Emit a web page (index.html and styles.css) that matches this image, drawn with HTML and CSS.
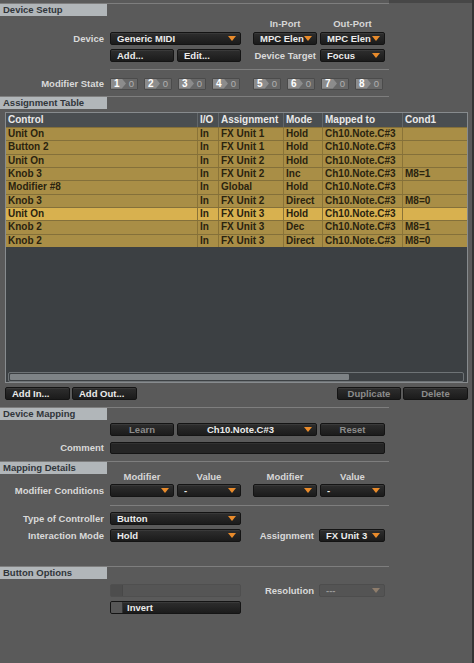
FILE: index.html
```html
<!DOCTYPE html>
<html lang="en">
<head>
<meta charset="utf-8">
<title>Controller Manager</title>
<link rel="stylesheet" href="styles.css">
</head>
<body>
<div class="page">
  <div class="topbar"><div class="topbar-l"></div><div class="topbar-r"></div></div>

  <section class="sec">
    <div class="sec-head"><div class="sec-title">Device Setup</div></div>
    <div class="row row-titles mt2">
      <span class="coltitle c-c">In-Port</span>
      <span class="coltitle c-d">Out-Port</span>
    </div>
    <div class="row mt2">
      <span class="lbl">Device</span>
      <div class="dd c-ab"><span class="dd-t">Generic MIDI</span><svg class="arr" viewBox="0 0 8 5"><path d="M0 0H8L4 5Z"/></svg></div>
      <div class="dd c-c"><span class="dd-t">MPC Elen</span><svg class="arr" viewBox="0 0 8 5"><path d="M0 0H8L4 5Z"/></svg></div>
      <div class="dd c-d"><span class="dd-t">MPC Elen</span><svg class="arr" viewBox="0 0 8 5"><path d="M0 0H8L4 5Z"/></svg></div>
    </div>
    <div class="row mt4">
      <div class="btn btn-left c-a">Add...</div>
      <div class="btn btn-left c-b">Edit...</div>
      <span class="lbl lbl-mid c-c">Device Target</span>
      <div class="dd c-d"><span class="dd-t">Focus</span><svg class="arr" viewBox="0 0 8 5"><path d="M0 0H8L4 5Z"/></svg></div>
    </div>
    <div class="rule rule-inset mt7"></div>
    <div class="row row-mods mt7">
      <span class="lbl">Modifier State</span>
      <div class="modgrp c-a">
        <span class="mod"><span class="mod-n">1</span><span class="mod-v">0</span></span>
        <span class="mod"><span class="mod-n">2</span><span class="mod-v">0</span></span>
      </div>
      <div class="modgrp modgrp-shift c-b">
        <span class="mod"><span class="mod-n">3</span><span class="mod-v">0</span></span>
        <span class="mod"><span class="mod-n">4</span><span class="mod-v">0</span></span>
      </div>
      <div class="modgrp c-c">
        <span class="mod"><span class="mod-n">5</span><span class="mod-v">0</span></span>
        <span class="mod"><span class="mod-n">6</span><span class="mod-v">0</span></span>
      </div>
      <div class="modgrp modgrp-shift c-d">
        <span class="mod"><span class="mod-n">7</span><span class="mod-v">0</span></span>
        <span class="mod"><span class="mod-n">8</span><span class="mod-v">0</span></span>
      </div>
    </div>
  </section>

  <section class="sec mt7">
    <div class="sec-head"><div class="sec-title">Assignment Table</div></div>
    <div class="tbl mt3">
      <div class="tgrid thead">
        <span>Control</span><span>I/O</span><span>Assignment</span><span>Mode</span><span>Mapped to</span><span>Cond1</span>
      </div>
      <div class="tgrid trow"><span>Unit On</span><span>In</span><span>FX Unit 1</span><span>Hold</span><span>Ch10.Note.C#3</span><span></span></div>
      <div class="tgrid trow"><span>Button 2</span><span>In</span><span>FX Unit 1</span><span>Hold</span><span>Ch10.Note.C#3</span><span></span></div>
      <div class="tgrid trow"><span>Unit On</span><span>In</span><span>FX Unit 2</span><span>Hold</span><span>Ch10.Note.C#3</span><span></span></div>
      <div class="tgrid trow"><span>Knob 3</span><span>In</span><span>FX Unit 2</span><span>Inc</span><span>Ch10.Note.C#3</span><span>M8=1</span></div>
      <div class="tgrid trow"><span>Modifier #8</span><span>In</span><span>Global</span><span>Hold</span><span>Ch10.Note.C#3</span><span></span></div>
      <div class="tgrid trow"><span>Knob 3</span><span>In</span><span>FX Unit 2</span><span>Direct</span><span>Ch10.Note.C#3</span><span>M8=0</span></div>
      <div class="tgrid trow trow-sel"><span>Unit On</span><span>In</span><span>FX Unit 3</span><span>Hold</span><span>Ch10.Note.C#3</span><span></span></div>
      <div class="tgrid trow"><span>Knob 2</span><span>In</span><span>FX Unit 3</span><span>Dec</span><span>Ch10.Note.C#3</span><span>M8=1</span></div>
      <div class="tgrid trow"><span>Knob 2</span><span>In</span><span>FX Unit 3</span><span>Direct</span><span>Ch10.Note.C#3</span><span>M8=0</span></div>
      <div class="hscroll"><div class="thumb"></div></div>
    </div>
    <div class="btnbar mt4">
      <div class="btn btn-left btn-w65">Add In...</div>
      <div class="btn btn-left btn-w65">Add Out...</div>
      <div class="btnbar-fill"></div>
      <div class="btn btn-off btn-w64">Duplicate</div>
      <div class="btn btn-off btn-w65">Delete</div>
    </div>
  </section>

  <section class="sec mt7">
    <div class="sec-head"><div class="sec-title">Device Mapping</div></div>
    <div class="row mt3">
      <div class="btn btn-off c-a">Learn</div>
      <div class="dd dd-center c-bc"><span class="dd-t">Ch10.Note.C#3</span><svg class="arr" viewBox="0 0 8 5"><path d="M0 0H8L4 5Z"/></svg></div>
      <div class="btn btn-off c-d">Reset</div>
    </div>
    <div class="row row-12 mt5">
      <span class="lbl">Comment</span>
      <div class="field c-all"></div>
    </div>
  </section>

  <section class="sec mt8">
    <div class="sec-head"><div class="sec-title">Mapping Details</div></div>
    <div class="row row-titles2">
      <span class="coltitle c-a">Modifier</span>
      <span class="coltitle c-b">Value</span>
      <span class="coltitle c-c">Modifier</span>
      <span class="coltitle c-d">Value</span>
    </div>
    <div class="row mt3">
      <span class="lbl">Modifier Conditions</span>
      <div class="dd c-a"><span class="dd-t"></span><svg class="arr" viewBox="0 0 8 5"><path d="M0 0H8L4 5Z"/></svg></div>
      <div class="dd c-b"><span class="dd-t">-</span><svg class="arr" viewBox="0 0 8 5"><path d="M0 0H8L4 5Z"/></svg></div>
      <div class="dd c-c"><span class="dd-t"></span><svg class="arr" viewBox="0 0 8 5"><path d="M0 0H8L4 5Z"/></svg></div>
      <div class="dd c-d"><span class="dd-t">-</span><svg class="arr" viewBox="0 0 8 5"><path d="M0 0H8L4 5Z"/></svg></div>
    </div>
    <div class="rule rule-inset mt8"></div>
    <div class="row mt6">
      <span class="lbl">Type of Controller</span>
      <div class="dd c-ab"><span class="dd-t">Button</span><svg class="arr" viewBox="0 0 8 5"><path d="M0 0H8L4 5Z"/></svg></div>
    </div>
    <div class="row mt4">
      <span class="lbl">Interaction Mode</span>
      <div class="dd c-ab"><span class="dd-t">Hold</span><svg class="arr" viewBox="0 0 8 5"><path d="M0 0H8L4 5Z"/></svg></div>
      <span class="lbl lbl-mid2 c-c">Assignment</span>
      <div class="dd dd-shift c-d"><span class="dd-t">FX Unit 3</span><svg class="arr" viewBox="0 0 8 5"><path d="M0 0H8L4 5Z"/></svg></div>
    </div>
  </section>

  <section class="sec mt24">
    <div class="sec-head"><div class="sec-title">Button Options</div></div>
    <div class="row mt5">
      <div class="slider c-ab"><span class="slider-knob"></span></div>
      <span class="lbl lbl-mid2 c-c">Resolution</span>
      <div class="dd dd-off dd-shift c-d"><span class="dd-t">---</span><svg class="arr" viewBox="0 0 8 5"><path d="M0 0H8L4 5Z"/></svg></div>
    </div>
    <div class="row mt4">
      <div class="chk c-ab"><span class="chk-box"></span><span>Invert</span></div>
    </div>
  </section>
</div>
</body>
</html>
```

FILE: styles.css
```css
* { box-sizing: border-box; }
html, body { margin: 0; padding: 0; }
body {
  width: 474px;
  height: 663px;
  overflow: hidden;
  background: #5a5a5a;
  font-family: "Liberation Sans", Arial, sans-serif;
  font-weight: bold;
  font-size: 9.5px;
  color: #d8d8d8;
}
.page {
  width: 474px;
  height: 663px;
  border-right: 2px solid #343434;
}
.topbar { display: flex; height: 3px; }
.topbar-l { width: 389px; }
.topbar-r { flex: 1; background: #474747; }

.mt2 { margin-top: 2px; }
.mt3 { margin-top: 3px; }
.mt4 { margin-top: 4px; }
.mt5 { margin-top: 5px; }
.mt6 { margin-top: 6px; }
.mt7 { margin-top: 7px; }
.mt8 { margin-top: 8px; }
.mt24 { margin-top: 24px; }

.sec-head {
  width: 389px;
  border-top: 1px solid #7e7e7e;
}
.sec-title {
  width: 107px;
  height: 12px;
  line-height: 12px;
  padding-left: 3px;
  background: #b1b6b9;
  color: #30353a;
  white-space: nowrap;
}

.rule { height: 1px; background: #7e7e7e; width: 389px; }
.rule-inset { margin-left: 110px; width: 279px; }

.row {
  display: grid;
  grid-template-columns: 104px 6px 64px 3px 64px 12px 64px 3px 65px;
  align-items: center;
  width: 389px;
  height: 13px;
}
.row-12 { height: 12px; }
.row-titles { height: 12px; }
.row-titles2 { height: 10px; margin-top: -3px; }
.row-mods { height: 12px; }

.c-a { grid-column: 3; }
.c-b { grid-column: 5; }
.c-c { grid-column: 7; }
.c-d { grid-column: 9; }
.c-ab { grid-column: 3 / 6; }
.c-bc { grid-column: 5 / 8; }
.c-all { grid-column: 3 / 10; }

.lbl {
  grid-column: 1;
  text-align: right;
  white-space: nowrap;
  color: #d9d9d9;
  line-height: 13px;
}
.lbl.c-c { grid-column: 7; }
.lbl-mid { padding-right: 1px; }
.lbl-mid2 { padding-right: 3px; }

.coltitle {
  text-align: center;
  color: #d6d6d6;
  line-height: 12px;
  white-space: nowrap;
}

.dd, .btn, .field, .chk {
  height: 13px;
  border: 1px solid #141414;
  border-radius: 2px;
  background: linear-gradient(#2e2e2e, #1b1b1b);
  box-shadow: inset 0 1px 0 rgba(255,255,255,0.06);
  color: #ececec;
  white-space: nowrap;
  overflow: hidden;
}
.dd {
  display: flex;
  align-items: center;
  padding: 0 4px 0 6px;
}
.dd-t { flex: 1; line-height: 11px; overflow: hidden; }
.dd-center .dd-t { padding-left: 23px; }
.dd-shift { margin-left: -1px; }
.arr { width: 8px; height: 5px; flex: none; fill: #e98b2b; }
.dd-off {
  background: #545454;
  border-color: #4d4d4d;
  box-shadow: none;
  color: #9a9a9a;
}
.dd-off .arr { fill: #8e7d6c; }

.btn {
  line-height: 11px;
  text-align: center;
}
.btn-left { text-align: left; padding-left: 6px; }
.btn-off { color: #8c8c8c; }
.btn-w64 { width: 64px; }
.btn-w65 { width: 65px; }

.field { height: 12px; background: #252525; }

.modgrp { display: flex; gap: 6px; }
.modgrp-shift { padding-left: 1px; }
.mod {
  display: flex;
  width: 28px;
  height: 12px;
  background: #686868;
  border: 1px solid #4b4b4b;
  border-radius: 1px;
}
.mod-n {
  width: 15px;
  background: #8c8c8c;
  color: #fff;
  padding-left: 3px;
  font-size: 10px;
  line-height: 10px;
  clip-path: polygon(0 0, 72% 0, 100% 50%, 72% 100%, 0 100%);
}
.mod-v {
  flex: 1;
  color: #b0b0b0;
  font-weight: normal;
  line-height: 10px;
  text-align: center;
}

.tbl {
  margin-left: 5px;
  width: 463px;
  height: 271px;
  border: 1px solid #878b8e;
  background: #3c4043;
  display: flex;
  flex-direction: column;
}
.tgrid {
  display: grid;
  grid-template-columns: 191px 21px 65px 39px 80px 1fr;
  font-size: 10px;
  white-space: nowrap;
}
.tgrid > span { padding-left: 2px; overflow: hidden; }
.tgrid > span + span { border-left: 1px solid #8a7337; }
.thead {
  height: 14px;
  line-height: 14px;
  background: #4a4e51;
  color: #e9e9e9;
}
.thead > span + span { border-left-color: #62676a; }
.trow {
  height: 13.333px;
  line-height: 12.333px;
  background: #a98e46;
  color: #2a230f;
  border-top: 1px solid #84703a;
}
.trow-sel { background: #d8b14f; }
.hscroll {
  margin: auto 3px 0 2px;
  height: 10px;
  border: 1px solid #6e7376;
  border-radius: 2px;
  padding: 1px;
}
.thumb {
  width: 339px;
  height: 100%;
  background: #7e8386;
  border-radius: 1px;
}

.btnbar {
  display: flex;
  gap: 2px;
  margin-left: 5px;
  width: 463px;
  height: 13px;
}
.btnbar-fill { flex: 1; }

.slider {
  height: 13px;
  display: flex;
  background: #555;
  border: 1px solid #4f4f4f;
  border-radius: 2px;
}
.slider-knob {
  width: 12px;
  background: #4d4d4d;
  border-right: 1px solid #484848;
}

.chk {
  display: flex;
  align-items: center;
  line-height: 11px;
}
.chk-box {
  width: 12px;
  height: 11px;
  background: #575757;
  border-right: 1px solid #333;
  margin-right: 4px;
}
```
